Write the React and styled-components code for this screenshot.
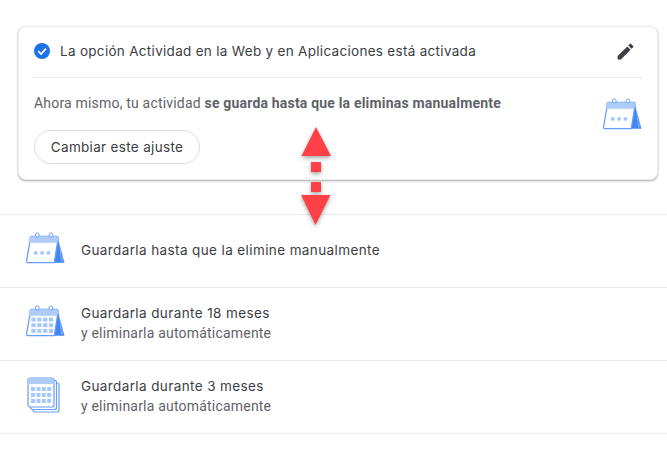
import React from "react";
import styled, { createGlobalStyle } from "styled-components";

const Global = createGlobalStyle`
  html, body { margin: 0; padding: 0; background: #fff; }
  body { font-family: Roboto, "Liberation Sans", sans-serif; }
`;

const Page = styled.div`
  position: relative;
  width: 667px;
  height: 453px;
  overflow: hidden;
  padding-top: 26px;
  box-sizing: border-box;
`;

const Card = styled.section`
  margin: 0 9px 0 18px;
  height: 154px;
  box-sizing: border-box;
  padding: 0 15px;
  background: #fff;
  border: 1px solid #eceded;
  border-radius: 8px;
  box-shadow: 0 1px 2px rgba(60, 64, 67, 0.35), 0 1px 3px rgba(60, 64, 67, 0.12);
`;

const CardHeader = styled.div`
  display: flex;
  align-items: center;
  height: 48px;
  padding-bottom: 2px;
  border-bottom: 1px solid #e8eaed;
`;

const HeaderTitle = styled.span`
  flex: 1;
  margin-left: 10px;
  font-family: Inter, Roboto, sans-serif;
  font-size: 13.5px;
  font-weight: 400;
  color: #3c4043;
  letter-spacing: 0.3px;
`;

const EditIcon = styled.span`
  display: flex;
  margin-right: 6px;
`;

const CardBody = styled.div`
  display: flex;
  justify-content: space-between;
`;

const BodyText = styled.div`
  padding-top: 16px;
`;

const Status = styled.p`
  margin: 0;
  font-size: 14px;
  line-height: 18px;
  color: #5f6368;
  letter-spacing: 0.19px;
  b { font-weight: 700; }
`;

const ChangeButton = styled.button`
  display: block;
  margin-top: 18px;
  width: 166px;
  height: 34px;
  padding: 0;
  background: #fff;
  border: 1px solid #dadce0;
  border-radius: 17px;
  font-family: Inter, Roboto, sans-serif;
  font-size: 13.5px;
  font-weight: 400;
  color: #3c4043;
  letter-spacing: 0.32px;
`;

const BodyIcon = styled.div`
  padding: 20px 0 0 0;
  line-height: 0;
`;

const OptionList = styled.ul`
  list-style: none;
  margin: 34px 0 0;
  padding: 0;
  border-top: 1px solid #e8eaed;
`;

const Option = styled.li`
  display: flex;
  align-items: center;
  height: 72px;
  padding-left: 26px;
  border-bottom: 1px solid #e8eaed;
`;

const OptionIcon = styled.div`
  display: flex;
  width: 39px;
  margin-bottom: ${(p) => p.$lift}px;
`;

const OptionText = styled.div`
  margin: 0 0 2px 16px;
`;

const OptionTitle = styled.div`
  font-family: Inter, Roboto, sans-serif;
  font-size: 13.5px;
  font-weight: 400;
  line-height: 19px;
  color: #3c4043;
  letter-spacing: 0.39px;
`;

const OptionSub = styled.div`
  font-size: 14px;
  line-height: 20px;
  color: #5f6368;
  letter-spacing: 0.2px;
`;

const ArrowOverlay = styled.svg`
  position: absolute;
  left: 295px;
  top: 120px;
  filter: drop-shadow(0 2px 2px rgba(0, 0, 0, 0.35));
`;

const blue = "#4285f4";

const Rings = () => (
  <g fill="#fff" stroke="#669df6" strokeWidth="1">
    <circle cx="11.500" cy="2.6" r="2" />
    <circle cx="25.500" cy="2.6" r="2" />
  </g>
);

const DeskBase = () => (
  <>
    <path d="M32 4 L39.500 31 H28 Z" fill={blue} />
    <path d="M34.500 12 L36.500 30 M36.500 18 L38 30" stroke="#a8c7fa" strokeWidth=".6" />
    <path d="M5 4 H31 a2 2 0 0 1 2 2 L29 31 H2 a1.5 1.5 0 0 1 -1.5 -1.5 Z" fill="#fff" stroke="#669df6" strokeWidth="1.3" strokeLinejoin="round" />
    <path d="M5 4 H31 a2 2 0 0 1 2 2 L32 10.500 H2.800 L3 6 a2 2 0 0 1 2 -2 Z" fill="#aecbfa" />
    <Rings />
  </>
);

const DotsCalendar = () => (
  <svg width="39" height="32" viewBox="0 0 40 32">
    <DeskBase />
    <g fill="#a8c7fa">
      <circle cx="10" cy="21" r="2" />
      <circle cx="16.5" cy="21" r="2" />
      <circle cx="23" cy="21" r="2" />
    </g>
  </svg>
);

const GridCells = ({ x, y, cols, rows, w, h, gx, gy }) => (
  <g fill="#a8c7fa">
    {Array.from({ length: rows * cols }, (_, i) => (
      <rect key={i} x={x + (i % cols) * gx} y={y + Math.floor(i / cols) * gy} width={w} height={h} />
    ))}
  </g>
);

const GridCalendar = () => (
  <svg width="39" height="32" viewBox="0 0 40 32">
    <DeskBase />
    <GridCells x={5.5} y={12.500} cols={4} rows={3} w={4.4} h={4} gx={6} gy={5.8} />
  </svg>
);

const StackCalendar = () => (
  <svg width="38" height="36" viewBox="-1 0 38 36">
    <rect x="6" y="6" width="26" height="29" rx="2" fill="#fff" stroke="#669df6" strokeWidth="1.2" />
    <rect x="3.5" y="3.5" width="26" height="29" rx="2" fill="#fff" stroke="#669df6" strokeWidth="1.2" />
    <rect x="1" y="1" width="26" height="29" rx="2" fill="#fff" stroke="#669df6" strokeWidth="1.2" />
    <path d="M3 1 H25 a2 2 0 0 1 2 2 V7 H1 V3 a2 2 0 0 1 2 -2 Z" fill="#aecbfa" />
    <GridCells x={4} y={10} cols={4} rows={3} w={4} h={4} gx={5.4} gy={6} />
  </svg>
);

const CheckIcon = () => (
  <svg width="16" height="16" viewBox="0 0 16 16" style={{ flex: "none" }}>
    <circle cx="8" cy="8" r="8" fill="#1a73e8" />
    <path d="M4.2 8.2 L7 11 L12 5.6" fill="none" stroke="#fff" strokeWidth="1.7" />
  </svg>
);

const PencilIcon = () => (
  <svg width="21" height="21" viewBox="0 0 24 24">
    <path fill="#3c4043" d="M3 17.25V21h3.75L17.81 9.94l-3.75-3.75L3 17.25zM20.71 7.04a1 1 0 0 0 0-1.41l-2.34-2.34a1 1 0 0 0-1.41 0l-1.83 1.83 3.75 3.75 1.83-1.83z" />
  </svg>
);

const options = [
  { icon: <DotsCalendar />, lift: 6, title: "Guardarla hasta que la elimine manualmente" },
  { icon: <GridCalendar />, lift: 6, title: "Guardarla durante 18 meses", sub: "y eliminarla automáticamente" },
  { icon: <StackCalendar />, lift: 5, title: "Guardarla durante 3 meses", sub: "y eliminarla automáticamente" },
];

export default function App() {
  return (
    <Page>
      <Global />
      <Card>
        <CardHeader>
          <CheckIcon />
          <HeaderTitle>La opción Actividad en la Web y en Aplicaciones está activada</HeaderTitle>
          <EditIcon>
            <PencilIcon />
          </EditIcon>
        </CardHeader>
        <CardBody>
          <BodyText>
            <Status>
              Ahora mismo, tu actividad <b>se guarda hasta que la eliminas manualmente</b>
            </Status>
            <ChangeButton>Cambiar este ajuste</ChangeButton>
          </BodyText>
          <BodyIcon>
            <DotsCalendar />
          </BodyIcon>
        </CardBody>
      </Card>
      <OptionList>
        {options.map((o) => (
          <Option key={o.title}>
            <OptionIcon $lift={o.lift}>{o.icon}</OptionIcon>
            <OptionText>
              <OptionTitle>{o.title}</OptionTitle>
              {o.sub && <OptionSub>{o.sub}</OptionSub>}
            </OptionText>
          </Option>
        ))}
      </OptionList>
      <ArrowOverlay width="45" height="112" viewBox="0 0 45 112" fill="#ff4046">
        <path d="M21 7 L36 36 H6.500 Z" />
        <rect x="16" y="42" width="10" height="10" />
        <rect x="16" y="62" width="10" height="10" />
        <path d="M6 75 H35.500 L20.500 105 Z" />
      </ArrowOverlay>
    </Page>
  );
}
